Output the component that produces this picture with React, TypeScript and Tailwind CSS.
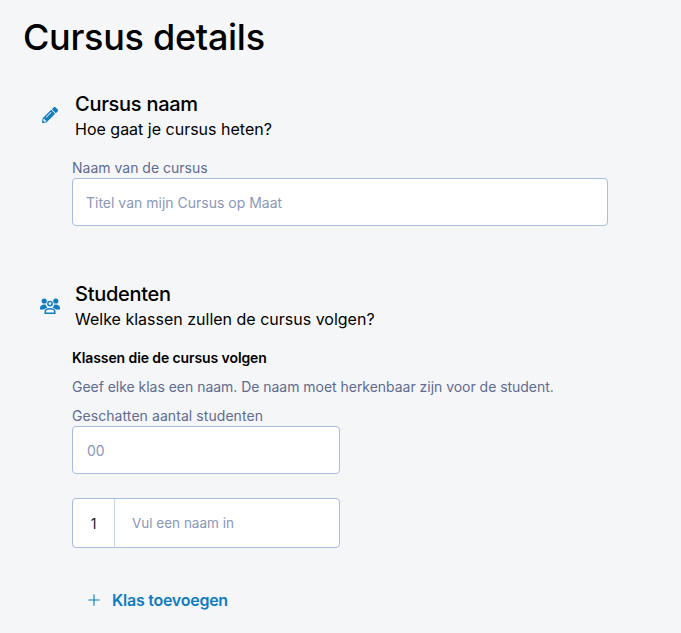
import { FaPencilAlt } from 'react-icons/fa';
import { Plus } from 'lucide-react';

function GroupIcon() {
  return (
    <svg width="20" height="16" viewBox="0 0 20 16" fill="currentColor">
      <circle cx="4.2" cy="3" r="2.6" />
      <circle cx="15.8" cy="3" r="2.6" />
      <circle cx="10" cy="5.6" r="2.2" fill="none" stroke="currentColor" strokeWidth="1.5" />
      <path d="M0 10.2C0 7.8 2 6.6 4.2 6.6c.8 0 1.3.1 1.8.3.1 1.2.7 2.2 1.5 2.8-1.5.3-2.7 1-3.3 1.8H0v-.3z" />
      <path d="M20 10.2c0-2.4-2-3.6-4.2-3.6-.8 0-1.3.1-1.8.3-.1 1.2-.7 2.2-1.5 2.8 1.5.3 2.7 1 3.3 1.8H20v-.3z" />
      <path
        d="M5.2 15.2v-1.6c0-1.7 2.3-2.9 4.8-2.9s4.8 1.2 4.8 2.9v1.6z"
        fill="none"
        stroke="currentColor"
        strokeWidth="1.5"
      />
    </svg>
  );
}

function SectionHeader({ icon, title, subtitle }: { icon: React.ReactNode; title: string; subtitle: string }) {
  return (
    <div className="flex items-center">
      <div className="w-[52px] shrink-0 pl-[17px] flex items-center text-[#0f7cc0]">{icon}</div>
      <div>
        <h2 className="text-[20px] leading-[26px] font-medium tracking-[-0.28px] text-black">{title}</h2>
        <p className="text-[16px] leading-[24px] text-black">{subtitle}</p>
      </div>
    </div>
  );
}

export default function App() {
  return (
    <div className="h-[633px] overflow-hidden bg-[#f5f6f8] font-['Inter',sans-serif] pl-[23px] pt-[15px]">
      <h1 className="text-[36px] leading-[44px] font-medium tracking-[-0.29px] text-black">Cursus details</h1>

      <section className="mt-[32px]">
        <SectionHeader
          icon={<FaPencilAlt size={16} className="ml-[2px] -mt-[2px]" />}
          title="Cursus naam"
          subtitle="Hoe gaat je cursus heten?"
        />
        <div className="ml-[49px] mt-[18px]">
          <label className="block text-[14px] leading-[18px] text-[#5f6b8f]">Naam van de cursus</label>
          <input
            placeholder="Titel van mijn Cursus op Maat"
            className="mt-[1px] block w-[536px] h-[48px] rounded-[4px] border border-[#a9bde0] bg-white px-[13px] text-[14px] outline-none placeholder:text-[#8b97b8]"
          />
        </div>
      </section>

      <section className="mt-[55px]">
        <SectionHeader icon={<GroupIcon />} title="Studenten" subtitle="Welke klassen zullen de cursus volgen?" />
        <div className="ml-[49px] mt-[18px]">
          <h3 className="text-[14px] leading-[18px] font-semibold tracking-[-0.1px] text-black">Klassen die de cursus volgen</h3>
          <p className="mt-[11px] text-[14px] leading-[18px] tracking-[-0.03px] text-[#5f6b8f]">
            Geef elke klas een naam. De naam moet herkenbaar zijn voor de student.
          </p>
          <label className="mt-[11px] block text-[14px] leading-[18px] tracking-[0.07px] text-[#5f6b8f]">Geschatten aantal studenten</label>
          <input
            placeholder="00"
            className="mt-[1px] block w-[268px] h-[48px] rounded-[4px] border border-[#a9bde0] bg-white px-[14px] text-[14px] outline-none placeholder:text-[#8b97b8]"
          />
          <div className="mt-[24px] flex w-[268px] h-[50px] rounded-[4px] border border-[#a9bde0] bg-white">
            <div className="w-[42px] shrink-0 flex items-center justify-center border-r border-[#c5d3ec] text-[14px] text-[#141a2c]">1</div>
            <input
              placeholder="Vul een naam in"
              className="min-w-0 flex-1 px-[17px] text-[13.5px] outline-none placeholder:text-[#8b97b8]"
            />
          </div>
          <button className="mt-[40px] ml-[13px] flex items-center gap-[9px] text-[16px] leading-[24px] font-semibold tracking-[-0.25px] text-[#0f7cc0]">
            <Plus size={18} strokeWidth={1.5} />
            Klas toevoegen
          </button>
        </div>
      </section>
    </div>
  );
}
